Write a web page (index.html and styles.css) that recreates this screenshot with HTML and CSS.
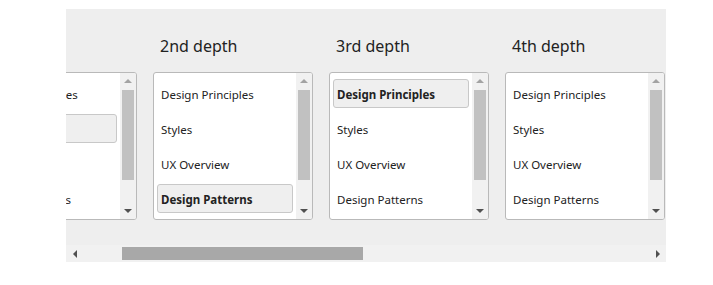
FILE: index.html
```html
<!DOCTYPE html>
<html>
<head>
<title>Depth Selector</title>
<link rel="stylesheet" href="styles.css">
</head>
<body>

<div class="depth-scroller">
    <div class="depth-viewport" id="depthViewport">
        <div class="depth-row">

            <!-- 1st depth -->
            <div class="depth-col">
                <div class="depth-title">1st depth</div>
                <div class="depth-box">
                    <div class="depth-list">
                        <div class="depth-item">Design Principles</div>
                        <div class="depth-item selected">Styles</div>
                        <div class="depth-item">UX Overview</div>
                        <div class="depth-item">Design Patterns</div>
                        <div class="depth-item">Components</div>
                    </div>
                    <div class="vscroll">
                        <div class="sb-btn"><span class="arrow-up"></span></div>
                        <div class="vscroll-track"><div class="vscroll-thumb"></div></div>
                        <div class="sb-btn"><span class="arrow-down"></span></div>
                    </div>
                </div>
            </div>

            <!-- 2nd depth -->
            <div class="depth-col">
                <div class="depth-title">2nd depth</div>
                <div class="depth-box">
                    <div class="depth-list">
                        <div class="depth-item">Design Principles</div>
                        <div class="depth-item">Styles</div>
                        <div class="depth-item">UX Overview</div>
                        <div class="depth-item selected">Design Patterns</div>
                        <div class="depth-item">Components</div>
                    </div>
                    <div class="vscroll">
                        <div class="sb-btn"><span class="arrow-up"></span></div>
                        <div class="vscroll-track"><div class="vscroll-thumb"></div></div>
                        <div class="sb-btn"><span class="arrow-down"></span></div>
                    </div>
                </div>
            </div>

            <!-- 3rd depth -->
            <div class="depth-col">
                <div class="depth-title">3rd depth</div>
                <div class="depth-box">
                    <div class="depth-list">
                        <div class="depth-item selected">Design Principles</div>
                        <div class="depth-item">Styles</div>
                        <div class="depth-item">UX Overview</div>
                        <div class="depth-item">Design Patterns</div>
                        <div class="depth-item">Components</div>
                    </div>
                    <div class="vscroll">
                        <div class="sb-btn"><span class="arrow-up"></span></div>
                        <div class="vscroll-track"><div class="vscroll-thumb"></div></div>
                        <div class="sb-btn"><span class="arrow-down"></span></div>
                    </div>
                </div>
            </div>

            <!-- 4th depth -->
            <div class="depth-col">
                <div class="depth-title">4th depth</div>
                <div class="depth-box">
                    <div class="depth-list">
                        <div class="depth-item">Design Principles</div>
                        <div class="depth-item">Styles</div>
                        <div class="depth-item">UX Overview</div>
                        <div class="depth-item">Design Patterns</div>
                        <div class="depth-item">Components</div>
                    </div>
                    <div class="vscroll">
                        <div class="sb-btn"><span class="arrow-up"></span></div>
                        <div class="vscroll-track"><div class="vscroll-thumb"></div></div>
                        <div class="sb-btn"><span class="arrow-down"></span></div>
                    </div>
                </div>
            </div>

            <!-- 5th depth -->
            <div class="depth-col">
                <div class="depth-title">5th depth</div>
                <div class="depth-box">
                    <div class="depth-list">
                        <div class="depth-item">Design Principles</div>
                        <div class="depth-item">Styles</div>
                        <div class="depth-item">UX Overview</div>
                        <div class="depth-item">Design Patterns</div>
                        <div class="depth-item">Components</div>
                    </div>
                    <div class="vscroll">
                        <div class="sb-btn"><span class="arrow-up"></span></div>
                        <div class="vscroll-track"><div class="vscroll-thumb"></div></div>
                        <div class="sb-btn"><span class="arrow-down"></span></div>
                    </div>
                </div>
            </div>

        </div>
    </div>

    <!-- horizontal scrollbar -->
    <div class="hscroll">
        <div class="sb-btn wide"><span class="arrow-left"></span></div>
        <div class="hscroll-track"><div class="hscroll-thumb"></div></div>
        <div class="sb-btn wide"><span class="arrow-right"></span></div>
    </div>
</div>

<script>
document.getElementById("depthViewport").scrollLeft = 97;
</script>

</body>
</html>
```

FILE: styles.css
```css
body {
    font-family: "Noto Sans", sans-serif;
    color: #222;
    margin: 8px;
}

.depth-scroller {
    width: 600px;
    margin: 1px 0 0 58px;
    background-color: #eeeeee;
}

.depth-viewport {
    height: 236px;
    overflow: hidden;
}

.depth-row {
    display: flex;
    gap: 16px;
    padding: 26px 8px 0 8px;
    width: max-content;
}

.depth-col {
    width: 160px;
}

.depth-title {
    font-size: 16px;
    line-height: 22px;
    padding-left: 7px;
    margin-bottom: 15px;
}

/* list box with its own scrollbar */
.depth-box {
    display: flex;
    height: 148px;
    box-sizing: border-box;
    background-color: #fff;
    border: 1px solid #b9b9b9;
    border-radius: 3px;
    overflow: hidden;
}

.depth-list {
    flex: 1;
    min-width: 0;
    overflow: hidden;
    padding: 6px 3px;
    display: flex;
    flex-direction: column;
    gap: 6px;
}

.depth-item {
    flex: none;
    font-size: 11.5px;
    line-height: 17px;
    padding: 6px 3px 4px 3px;
    border: 1px solid transparent;
    border-radius: 3px;
    white-space: nowrap;
}

.depth-item.selected {
    font-weight: bold;
    background-color: #efefef;
    border-color: #c8c8c8;
}

/* fake scrollbars */
.vscroll {
    width: 16px;
    flex: none;
    display: flex;
    flex-direction: column;
    background-color: #f1f1f1;
}

.sb-btn {
    height: 16px;
    flex: none;
    display: flex;
    align-items: center;
    justify-content: center;
}

.sb-btn.wide {
    width: 17px;
    height: 17px;
}

.vscroll-track {
    flex: 1;
    padding-top: 1px;
}

.vscroll-thumb {
    height: 90px;
    margin: 0 2px;
    background-color: #c1c1c1;
}

.arrow-up {
    border-left: 4px solid transparent;
    border-right: 4px solid transparent;
    border-bottom: 4px solid #a3a3a3;
}

.arrow-down {
    border-left: 4px solid transparent;
    border-right: 4px solid transparent;
    border-top: 4px solid #505050;
}

.arrow-left {
    border-top: 4px solid transparent;
    border-bottom: 4px solid transparent;
    border-right: 4px solid #505050;
}

.arrow-right {
    border-top: 4px solid transparent;
    border-bottom: 4px solid transparent;
    border-left: 4px solid #505050;
}

.hscroll {
    display: flex;
    height: 17px;
    background-color: #f1f1f1;
}

.hscroll-track {
    flex: 1;
    padding: 2px 0;
}

.hscroll-thumb {
    width: 241px;
    height: 13px;
    margin-left: 39px;
    background-color: #a8a8a8;
}
```
